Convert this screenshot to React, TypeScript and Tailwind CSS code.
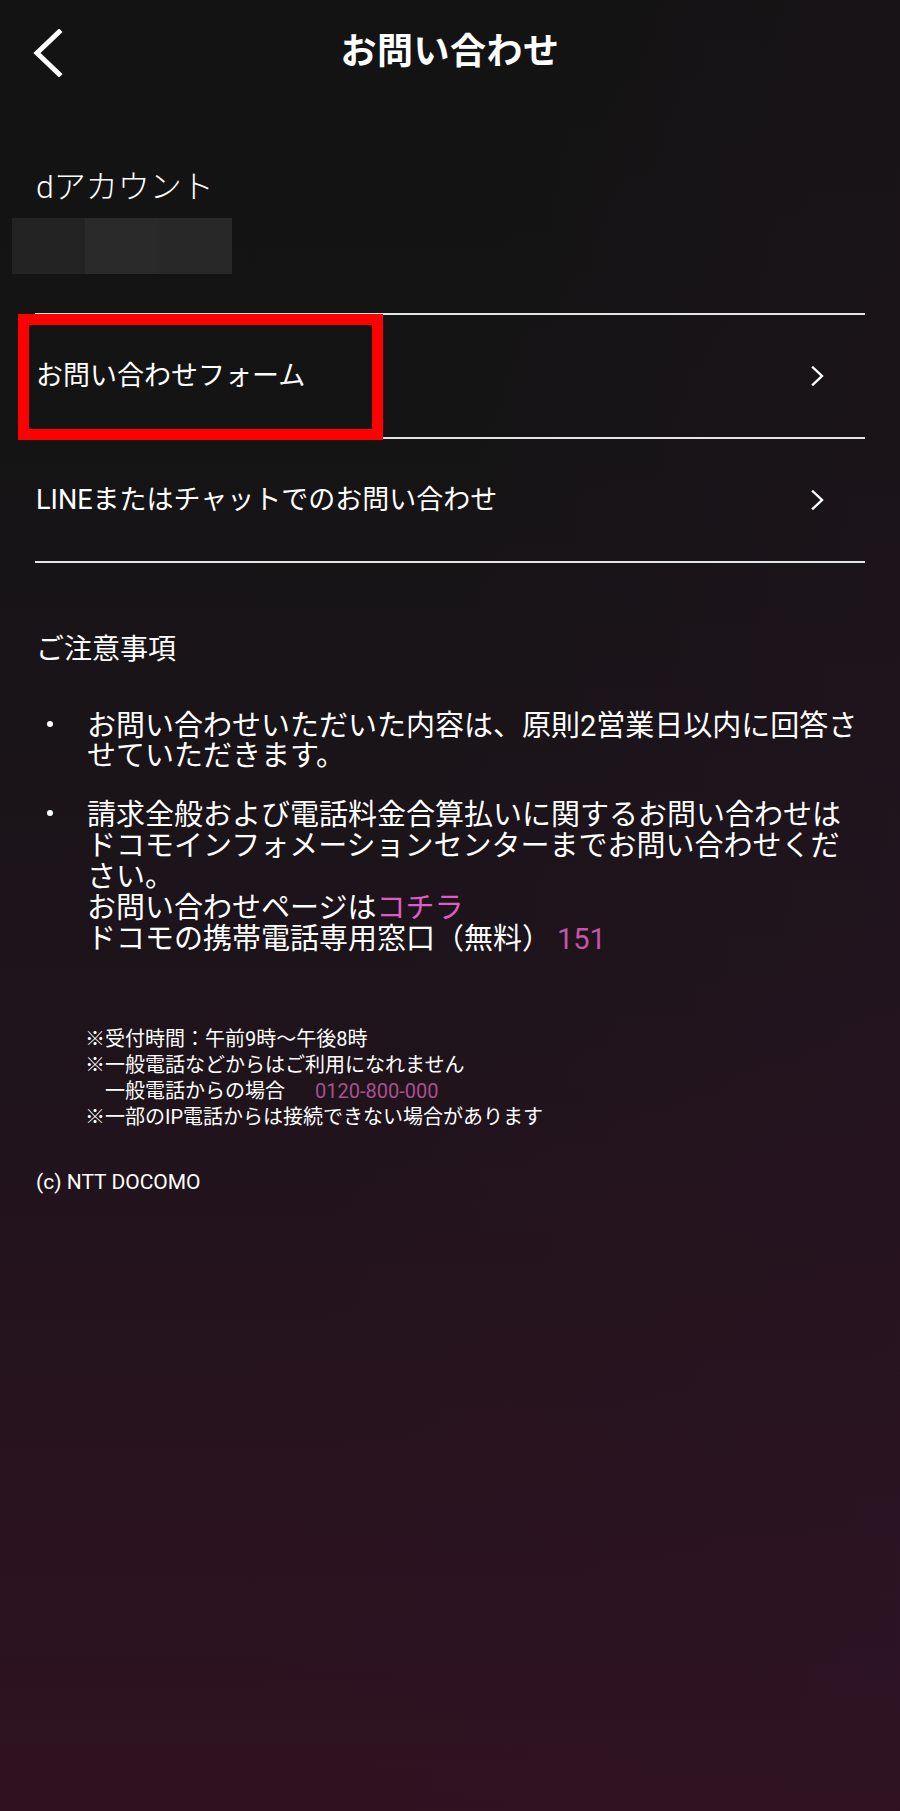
import React from "react";

const font = { fontFamily: 'Roboto, "Noto Sans CJK JP", "Noto Sans", sans-serif' };

function BackChevron() {
  return (
    <svg width="32" height="48" viewBox="0 0 32 48" fill="none">
      <polyline points="27,3 5,24 27,45" stroke="#ffffff" strokeWidth="5" strokeLinecap="square" strokeLinejoin="miter" />
    </svg>
  );
}

function RightChevron() {
  return (
    <svg width="14" height="20" viewBox="0 0 14 20" fill="none">
      <polyline points="2,1.5 11,10 2,18.5" stroke="#ffffff" strokeWidth="2.4" strokeLinecap="square" />
    </svg>
  );
}

export default function App() {
  return (
    <div
      style={font}
      className="relative min-h-[1811px] w-full overflow-hidden text-white bg-[linear-gradient(100deg,rgba(0,0,0,0)_45%,rgba(45,20,40,0.35)_100%),linear-gradient(180deg,#131313_0%,#151415_25%,#1c141a_50%,#24131c_72%,#2b1320_88%,#2f1220_100%)]"
    >
      {/* Header */}
      <header className="grid h-[104px] grid-cols-[1fr_auto_1fr] items-center">
        <div className="pl-[32px] pt-[2px]">
          <BackChevron />
        </div>
        <h1 className="text-[36px] font-bold leading-[44px] tracking-[0.5px]">お問い合わせ</h1>
        <div />
      </header>

      {/* Account */}
      <div className="mt-[63px] pl-[36px] text-[32px] font-light leading-[40px]">dアカウント</div>
      <div className="ml-[12px] mt-[11px] flex h-[56px] w-[220px]">
        <div className="h-full flex-1 bg-[#232323]" />
        <div className="h-full flex-1 bg-[#2a2a2a]" />
        <div className="h-full flex-1 bg-[#282828]" />
      </div>

      {/* Menu list */}
      <div className="relative mx-[35px] mt-[39px] border-t-2 border-[#e4e4e4]">
        <div className="flex h-[124px] items-center justify-between border-b-2 border-[#e4e4e4] pl-[1px] pr-[40px]">
          <span className="text-[27px] leading-[34px]">お問い合わせフォーム</span>
          <RightChevron />
        </div>
        <div className="flex h-[124px] items-center justify-between border-b-2 border-[#e4e4e4] pl-[1px] pr-[40px]">
          <span className="text-[27px] leading-[34px]">LINEまたはチャットでのお問い合わせ</span>
          <RightChevron />
        </div>
        {/* annotation box */}
        <div className="pointer-events-none absolute left-[-17px] top-[-1px] h-[126px] w-[365px] border-[11px] border-[#ff0000]" />
      </div>

      {/* Notes */}
      <div className="px-[35px]">
        <h2 className="mt-[69px] pl-[1px] text-[28px] font-normal leading-[36px]">ご注意事項</h2>

        <ul className="mt-[43px] text-[29px] leading-[30px]">
          <li className="flex">
            <div className="flex h-[30px] w-[52px] shrink-0 items-center pl-[12px]">
              <span className="mt-[-5px] block h-[6px] w-[6px] rounded-full bg-white" />
            </div>
            <div>
              お問い合わせいただいた内容は、原則2営業日以内に回答さ
              <br />
              せていただきます。
            </div>
          </li>
          <li className="mt-[29px] flex">
            <div className="flex h-[30px] w-[52px] shrink-0 items-center pl-[12px]">
              <span className="mt-[-5px] block h-[6px] w-[6px] rounded-full bg-white" />
            </div>
            <div className="leading-[31px]">
              請求全般および電話料金合算払いに関するお問い合わせは
              <br />
              ドコモインフォメーションセンターまでお問い合わせくだ
              <br />
              さい。
              <br />
              お問い合わせページは<span className="text-[#de5cc3]">コチラ</span>
              <br />
              ドコモの携帯電話専用窓口（無料）<span className="ml-[6px] text-[#c455a8]">151</span>
            </div>
          </li>
        </ul>

        <div className="ml-[50px] mt-[71px] text-[20px] leading-[26px]">
          <div>※受付時間：午前9時～午後8時</div>
          <div>※一般電話などからはご利用になれません</div>
          <div>
            {"\u3000一般電話からの場合\u3000"}
            <span className="ml-[10px] text-[#a9508f]">0120-800-000</span>
          </div>
          <div>※一部のIP電話からは接続できない場合があります</div>
        </div>

        <div className="mt-[38px] pl-[1px] text-[21px] leading-[28px]">(c) NTT DOCOMO</div>
      </div>
    </div>
  );
}
